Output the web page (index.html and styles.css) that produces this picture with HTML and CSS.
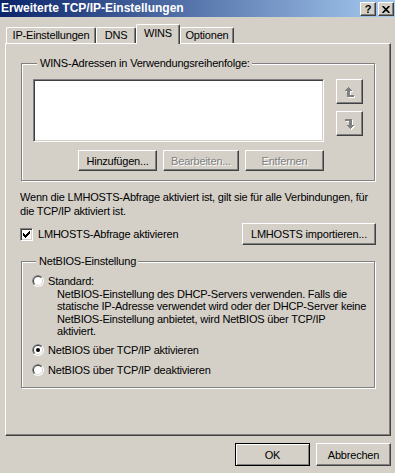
FILE: index.html
```html
<!DOCTYPE html>
<html lang="de">
<head>
  <meta charset="UTF-8">
  <title>Erweiterte TCP/IP-Einstellungen</title>
  <link rel="stylesheet" href="styles.css">
</head>
<body>
  <div class="window">
    <div class="titlebar">
      <span class="title">Erweiterte TCP/IP-Einstellungen</span>
      <span class="cap-btn help">?</span>
      <span class="cap-btn close">
        <svg width="8" height="7" viewBox="0 0 8 7"><path d="M0.6 0 L7.4 7 M7.4 0 L0.6 7" stroke="#000" stroke-width="1.7"/></svg>
      </span>
    </div>

    <div class="tabs">
      <div class="tab tab-ip">IP-Einstellungen</div>
      <div class="tab tab-dns">DNS</div>
      <div class="tab tab-wins active">WINS</div>
      <div class="tab tab-opt">Optionen</div>
    </div>

    <div class="panel">
      <div class="group group-wins">
        <span class="legend">WINS-Adressen in Verwendungsreihenfolge:</span>
        <div class="list-row">
          <div class="listbox"></div>
          <div class="move-btns">
            <button class="btn move">
              <svg width="10" height="11" viewBox="0 0 10 11">
                <path fill="#fff" transform="translate(1 1)" d="M3 0H4V1H5V2H6V3H7V4H5V8H9V10H2V4H0V3H1V2H2V1H3Z"/>
                <path fill="#808080" d="M3 0H4V1H5V2H6V3H7V4H5V8H9V10H2V4H0V3H1V2H2V1H3Z"/>
              </svg>
            </button>
            <button class="btn move">
              <svg width="10" height="11" viewBox="0 0 10 11">
                <path fill="#fff" transform="translate(1 1) rotate(180 4.5 5)" d="M3 0H4V1H5V2H6V3H7V4H5V8H9V10H2V4H0V3H1V2H2V1H3Z"/>
                <path fill="#808080" transform="rotate(180 4.5 5)" d="M3 0H4V1H5V2H6V3H7V4H5V8H9V10H2V4H0V3H1V2H2V1H3Z"/>
              </svg>
            </button>
          </div>
        </div>
        <div class="list-actions">
          <button class="btn act">Hinzufügen...</button>
          <button class="btn act act-edit disabled">Bearbeiten...</button>
          <button class="btn act disabled">Entfernen</button>
        </div>
      </div>

      <p class="note">Wenn die LMHOSTS-Abfrage aktiviert ist, gilt sie für alle Verbindungen, für<br>die TCP/IP aktiviert ist.</p>

      <div class="lmhosts-row">
        <label class="check">
          <span class="checkbox">
            <svg width="7" height="7" viewBox="0 0 7 7"><path d="M0 2H1V3H2V4H3V3H4V2H5V1H6V0H7V3H6V4H5V5H4V6H3V7H2V6H1V5H0Z" fill="#000"/></svg>
          </span>
          LMHOSTS-Abfrage aktivieren
        </label>
        <button class="btn import">LMHOSTS importieren...</button>
      </div>

      <div class="group group-netbios">
        <span class="legend">NetBIOS-Einstellung</span>
        <div class="radio r-standard">
          <svg class="radio-icon" width="12" height="12" viewBox="0 0 12 12">
            <circle cx="6" cy="6" r="6" fill="#fff"/>
            <path d="M1.757 10.243A6 6 0 0 1 10.243 1.757Z" fill="#808080"/>
            <circle cx="6" cy="6" r="5" fill="#d4d0c8"/>
            <path d="M2.464 9.536A5 5 0 0 1 9.536 2.464Z" fill="#404040"/>
            <circle cx="6" cy="6" r="4" fill="#fff"/>
          </svg>
          Standard:
        </div>
        <p class="radio-desc">NetBIOS-Einstellung des DHCP-Servers verwenden. Falls die<br>statische IP-Adresse verwendet wird oder der DHCP-Server keine<br>NetBIOS-Einstellung anbietet, wird NetBIOS über TCP/IP<br>aktiviert.</p>
        <div class="radio r-on">
          <svg class="radio-icon" width="12" height="12" viewBox="0 0 12 12">
            <circle cx="6" cy="6" r="6" fill="#fff"/>
            <path d="M1.757 10.243A6 6 0 0 1 10.243 1.757Z" fill="#808080"/>
            <circle cx="6" cy="6" r="5" fill="#d4d0c8"/>
            <path d="M2.464 9.536A5 5 0 0 1 9.536 2.464Z" fill="#404040"/>
            <circle cx="6" cy="6" r="4" fill="#fff"/>
            <circle cx="6" cy="6" r="2" fill="#000"/>
          </svg>
          NetBIOS über TCP/IP aktivieren
        </div>
        <div class="radio r-off">
          <svg class="radio-icon" width="12" height="12" viewBox="0 0 12 12">
            <circle cx="6" cy="6" r="6" fill="#fff"/>
            <path d="M1.757 10.243A6 6 0 0 1 10.243 1.757Z" fill="#808080"/>
            <circle cx="6" cy="6" r="5" fill="#d4d0c8"/>
            <path d="M2.464 9.536A5 5 0 0 1 9.536 2.464Z" fill="#404040"/>
            <circle cx="6" cy="6" r="4" fill="#fff"/>
          </svg>
          NetBIOS über TCP/IP deaktivieren
        </div>
      </div>
    </div>

    <div class="dialog-buttons">
      <button class="btn dlg default">OK</button>
      <button class="btn dlg">Abbrechen</button>
    </div>
  </div>
</body>
</html>
```

FILE: styles.css
```css
body {
  margin: 0;
  background-color: #d4d0c8;
  font-family: "Liberation Sans", Arial, sans-serif;
  font-size: 11px;
  letter-spacing: -0.2px;
  color: #000;
}
.window {
  width: 395px;
  height: 473px;
  overflow: hidden;
}
.titlebar {
  height: 17px;
  display: flex;
  align-items: flex-start;
  background: linear-gradient(to right, #0a246a, #a6caf0);
}
.title {
  flex: 1;
  padding-left: 1px;
  line-height: 17px;
  font-size: 12px;
  font-weight: bold;
  letter-spacing: 0;
  color: #fff;
  white-space: nowrap;
}
.cap-btn {
  width: 16px;
  height: 14px;
  margin-top: 2px;
  box-sizing: border-box;
  display: flex;
  align-items: center;
  justify-content: center;
  background-color: #d4d0c8;
  border: 1px solid;
  border-color: #fff #404040 #404040 #fff;
  box-shadow: inset -1px -1px #808080;
  font-weight: bold;
  font-size: 11px;
  line-height: 12px;
}
.cap-btn.help {
  margin-right: 2px;
}
.cap-btn.close {
  margin-right: 1px;
}

/* tabs */
.tabs {
  height: 19px;
  margin-top: 7px;
  padding-left: 6px;
  display: flex;
  align-items: flex-end;
}
.tab {
  height: 16px;
  box-sizing: border-box;
  border-top: 1px solid #fff;
  border-left: 1px solid #fff;
  border-right: 1px solid #404040;
  border-radius: 2px 2px 0 0;
  box-shadow: inset -1px 0 #808080;
  text-align: center;
  line-height: 15px;
  white-space: nowrap;
}
.tab-ip { width: 90px; }
.tab-dns { width: 40px; }
.tab-wins { width: 44px; }
.tab-opt { width: 54px; }
.tab.active {
  height: 20px;
  margin-bottom: -1px;
  position: relative;
  z-index: 1;
  background-color: #d4d0c8;
  line-height: 17px;
}

.panel {
  margin-left: 5px;
  width: 386px;
  height: 393px;
  box-sizing: border-box;
  border: 1px solid;
  border-color: #fff #404040 #404040 #fff;
  box-shadow: inset -1px -1px #808080;
  overflow: hidden;
}

/* group boxes */
.group {
  border: 1px solid #808080;
  box-shadow: 1px 1px 0 #fff, inset 1px 1px 0 #fff;
}
.legend {
  display: block;
  width: fit-content;
  margin: -7px 0 0 4px;
  padding: 0 2px 0 3px;
  line-height: 13px;
  background-color: #d4d0c8;
  white-space: nowrap;
}
.group-wins {
  margin: 19px 15px 0;
  padding: 0 11px 9px;
}
.list-row {
  margin-top: 9px;
  display: flex;
  align-items: flex-start;
}
.listbox {
  width: 291px;
  height: 63px;
  box-sizing: border-box;
  background-color: #fff;
  border: 1px solid;
  border-color: #808080 #fff #fff #808080;
  box-shadow: inset 1px 1px #404040, inset -1px -1px #d4d0c8;
}
.move-btns {
  margin-left: 12px;
  display: flex;
  flex-direction: column;
  gap: 7px;
}
.list-actions {
  width: 291px;
  margin-top: 8px;
  display: flex;
  justify-content: flex-end;
  gap: 6px;
}

/* buttons */
.btn {
  margin: 0;
  padding: 0;
  box-sizing: border-box;
  display: flex;
  align-items: center;
  justify-content: center;
  background-color: #d4d0c8;
  border: 1px solid;
  border-color: #fff #404040 #404040 #fff;
  border-radius: 0;
  box-shadow: inset -1px -1px #808080;
  font: inherit;
  letter-spacing: inherit;
  color: #000;
  white-space: nowrap;
}
.btn.disabled {
  color: #808080;
  text-shadow: 1px 1px 0 #fff;
}
.btn.move {
  width: 27px;
  height: 25px;
  padding-top: 2px;
}
.btn.act {
  width: 79px;
  height: 21px;
}
.btn.act-edit {
  width: 76px;
}
.btn.import {
  width: 134px;
  height: 22px;
}
.btn.dlg {
  width: 75px;
  height: 23px;
}
.btn.default {
  border-color: #000;
  box-shadow: inset 1px 1px #fff, inset -1px -1px #808080;
}

.note {
  margin: 9px 14px 0;
  line-height: 14px;
  white-space: nowrap;
}
.lmhosts-row {
  margin: 5px 14px 0;
  display: flex;
  align-items: center;
  justify-content: space-between;
}
.check {
  display: flex;
  align-items: center;
  white-space: nowrap;
}
.checkbox {
  width: 13px;
  height: 13px;
  margin-right: 5px;
  box-sizing: border-box;
  display: flex;
  align-items: center;
  justify-content: center;
  background-color: #fff;
  border: 1px solid;
  border-color: #808080 #fff #fff #808080;
  box-shadow: inset 1px 1px #404040, inset -1px -1px #d4d0c8;
}

.group-netbios {
  margin: 16px 15px 0;
  padding: 0 10px 11px;
}
.radio {
  display: flex;
  align-items: center;
  height: 13px;
  white-space: nowrap;
}
.radio-icon {
  margin-right: 4px;
  flex: none;
}
.r-standard { margin-top: 6px; }
.r-on { margin-top: 6px; }
.r-off { margin-top: 7px; }
.radio-desc {
  margin: 1px 0 0 25px;
  line-height: 12.33px;
  white-space: nowrap;
}

.dialog-buttons {
  margin-top: 7px;
  padding-right: 4px;
  display: flex;
  justify-content: flex-end;
  gap: 6px;
}
```
